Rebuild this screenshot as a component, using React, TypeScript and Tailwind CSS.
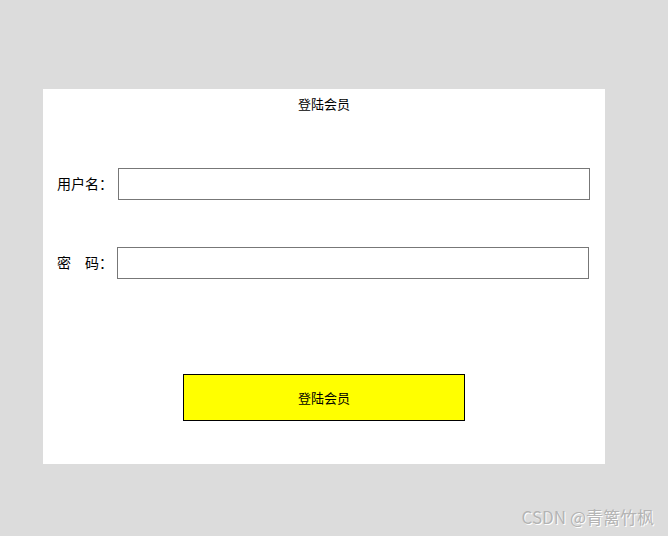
import React from 'react';

const font = { fontFamily: '"Noto Sans CJK SC", "Noto Sans", sans-serif' };

export default function App() {
  return (
    <div className="w-[668px] h-[536px] bg-[#dcdcdc] flex flex-col overflow-hidden" style={font}>
      <div className="mt-[89px] ml-[43px] w-[562px] h-[375px] bg-white flex flex-col text-[13px] text-black">
        {/* title */}
        <div className="pt-[6px] text-center leading-[18px]">登陆会员</div>

        {/* username */}
        <div className="flex items-center mt-[55px] pl-[14px]">
          <span className="w-[61px] text-[14px] leading-[18px] -mt-[2px]">用户名：</span>
          <input className="w-[472px] h-[32px] border border-[#777777] outline-none px-2" />
        </div>

        {/* password */}
        <div className="flex items-center mt-[47px] pl-[14px]">
          <span className="w-[60px] text-[14px] leading-[18px] -mt-[2px] whitespace-pre">密　码：</span>
          <input type="password" className="w-[472px] h-[32px] border border-[#777777] outline-none px-2" />
        </div>

        <div className="flex justify-center mt-[95px]">
          <button className="w-[282px] h-[47px] bg-[#ffff00] border border-black text-[13px]">登陆会员</button>
        </div>
      </div>

      <div className="flex justify-end pr-[14px] mt-[43px]">
        <span className="text-[17px] leading-[20px] text-[#b4b4b4] [text-shadow:1px_1px_0_#ffffff] whitespace-pre">CSDN @青篱竹枫</span>
      </div>
    </div>
  );
}
